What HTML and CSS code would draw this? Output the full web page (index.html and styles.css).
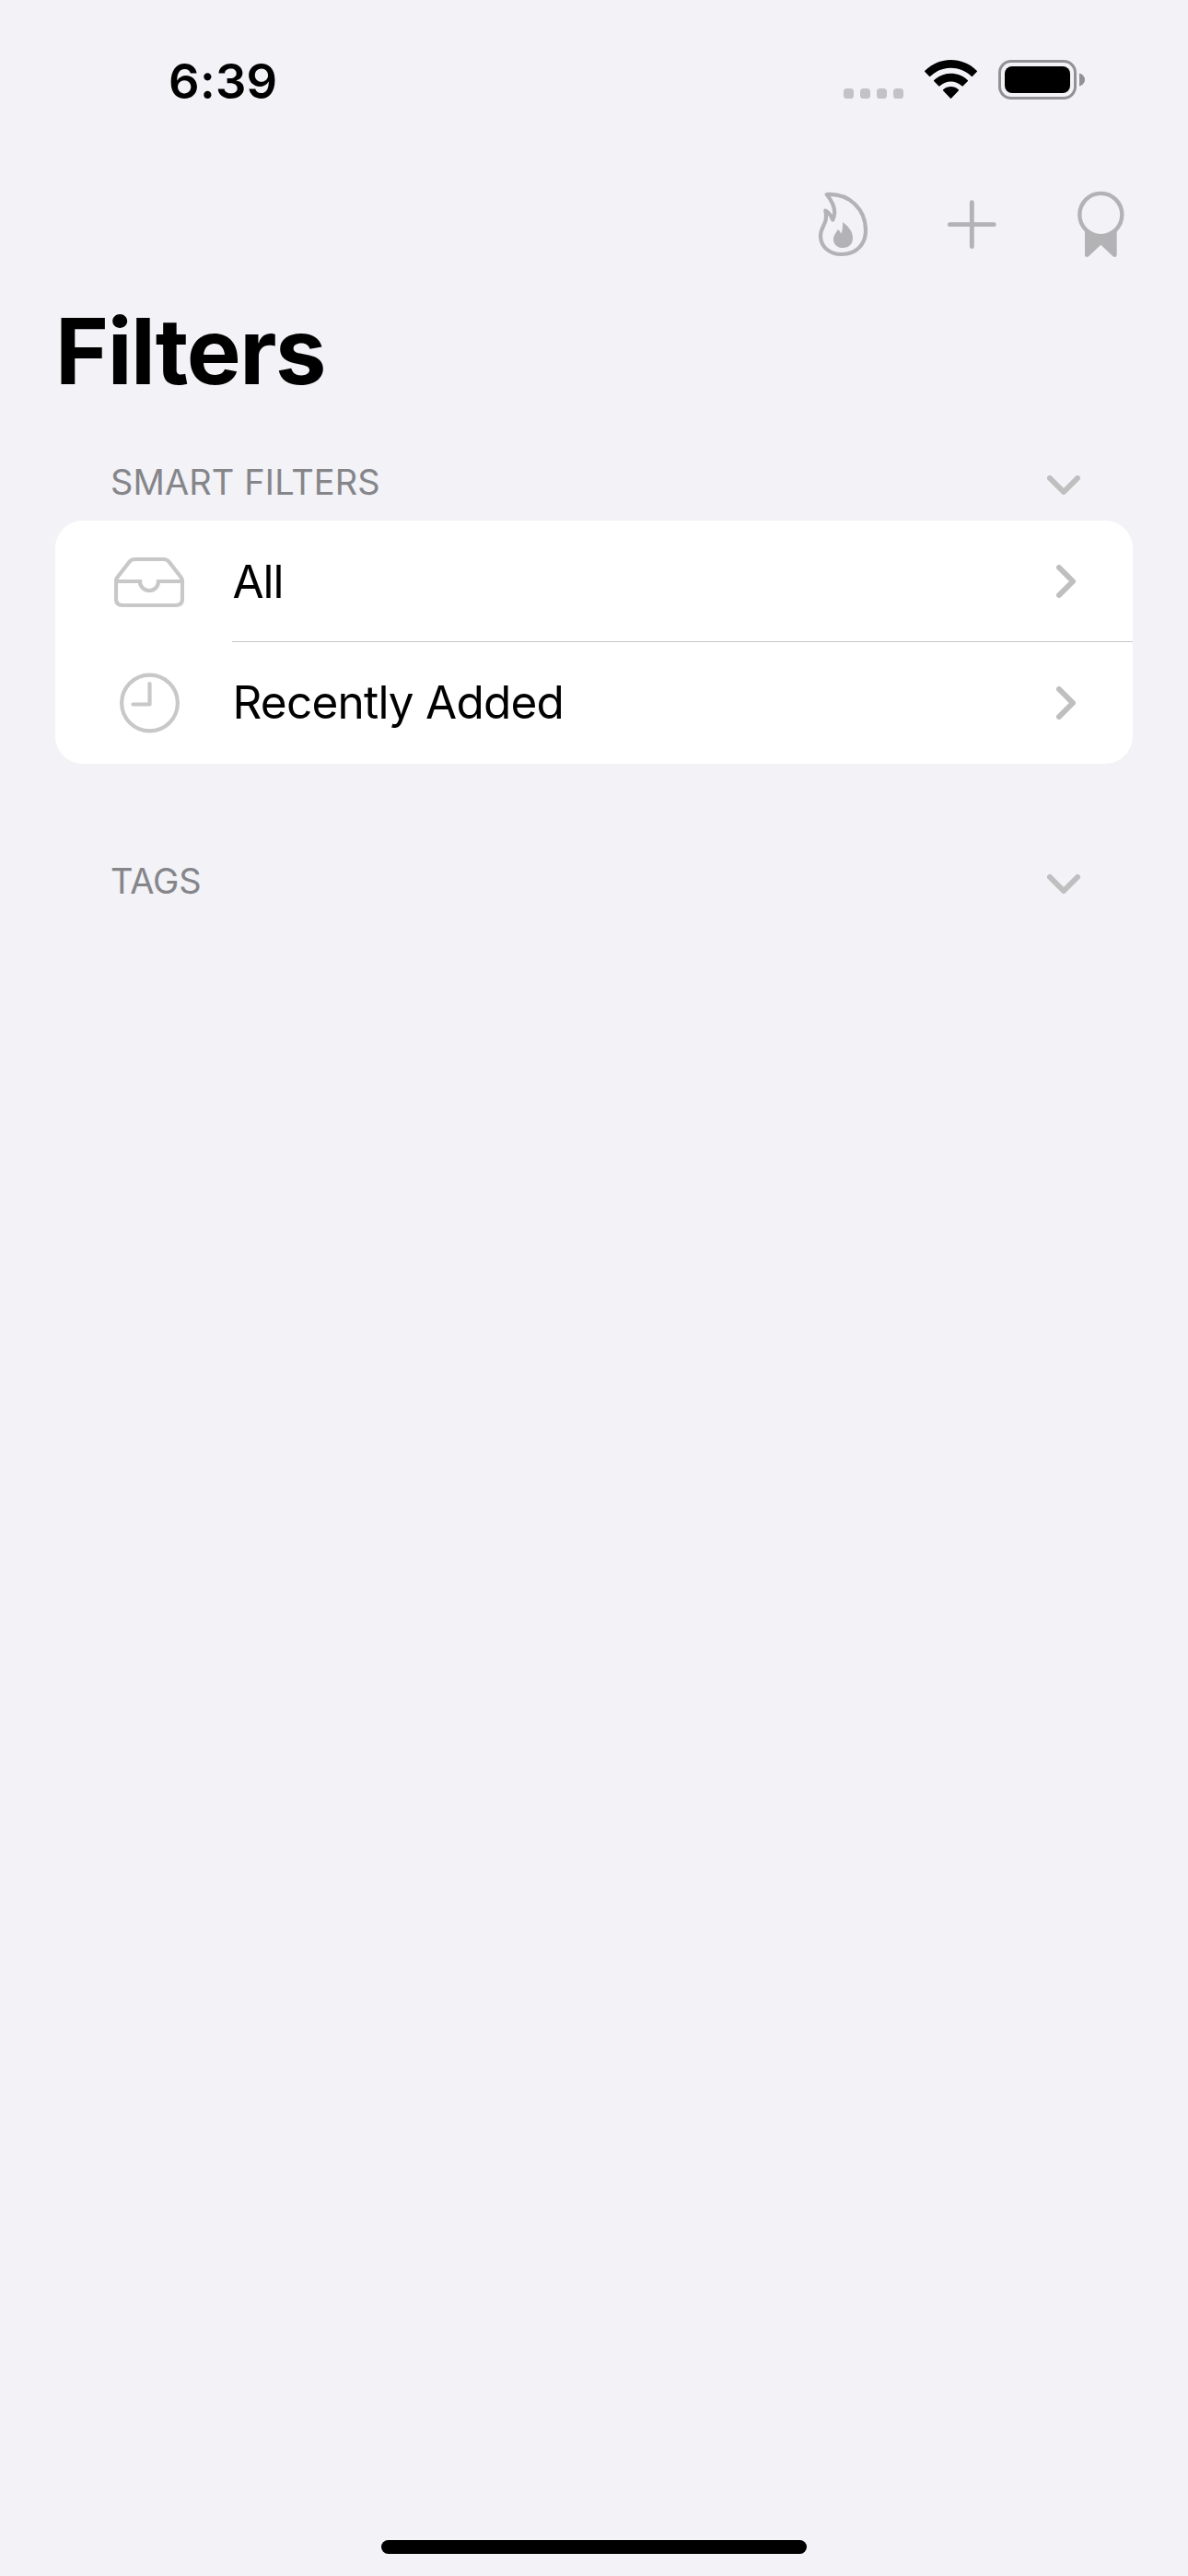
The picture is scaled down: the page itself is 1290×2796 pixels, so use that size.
FILE: index.html
```html
<!DOCTYPE html>
<html lang="en">
<head>
<meta charset="utf-8">
<title>Filters</title>
<link rel="stylesheet" href="styles.css">
</head>
<body>
<div class="screen">
  <header class="status">
    <span class="time">6:39</span>
    <div class="status-icons">
      <svg class="signal" viewBox="0 0 65 46"><g fill="#c3c2c7"><rect y="31" width="11" height="11" rx="3.6"/><rect x="18" y="31" width="11" height="11" rx="3.6"/><rect x="36" y="31" width="11" height="11" rx="3.6"/><rect x="54" y="31" width="11" height="11" rx="3.6"/></g></svg>
      <svg class="wifi" viewBox="312 45 172 138"><path d="M313 80C360 33 436 33 483 80Q485 82 483 84L469 98Q467 100 465 98C427 62 369 62 331 98Q329 100 327 98L313 84Q311 82 313 80ZM343 111C373 82 423 82 453 111Q455 113 453 115L438 130Q436 132 434 130C413 111 383 111 362 130Q360 132 358 130L343 115Q341 113 343 111ZM373 142C387 129 409 129 423 142Q425 144 423 146L400 170Q398 172 396 170L373 146Q371 144 373 142Z"/></svg>
      <svg class="battery" viewBox="0 0 94 46"><rect x="1.5" y="1.5" width="82" height="40" rx="12.5" fill="none" stroke="#929195" stroke-width="3"/><rect x="7" y="7" width="71" height="29" rx="8"/><path d="M88 14.5C91.700 15.500 94 18.300 94 21.500S91.700 27.500 88 28.500Z" fill="#929195"/></svg>
    </div>
  </header>

  <nav class="toolbar">
    <svg class="tool" width="53" height="90" viewBox="57 24 159 270"><path d="M83 63C158 59 210 112 210 180C210 225 180 258 132 258C90 258 63 232 63 198C63 164 88 162 79 116C91 122 98 134 103 146C114 123 108 94 83 63Z" fill="none" stroke="#b3b3b5" stroke-width="12.500" stroke-linejoin="round"/><path d="M135 153C154 168 168 183 168 205C168 225 156 237 136 237C117 237 105 225 105 209C105 195 114 190 119 177C125 181 128 186 130 191C134 183 136 168 135 153Z" fill="#b3b3b5"/></svg>
    <svg class="tool" width="53" height="90" viewBox="57 24 159 270"><path d="M64 161H208M136 89V233" stroke="#b3b3b5" stroke-width="14.500" stroke-linecap="round"/></svg>
    <svg class="tool" width="52" height="90" viewBox="477 24 156 270"><path d="M504 178H608V261Q608 267 601 267Q598 267 595 264L556 227L517 264Q514 267 511 267Q504 267 504 261Z" fill="#b3b3b5"/><ellipse cx="556" cy="129" rx="69" ry="69.500" fill="#f2f2f7" stroke="#b3b3b5" stroke-width="13"/></svg>
  </nav>

  <h1 class="title">Filters</h1>

  <section class="section">
    <div class="section-head">
      <h2 class="label">SMART FILTERS</h2>
      <svg class="down" viewBox="0 0 36 21"><path d="M3 3L18 18L33 3"/></svg>
    </div>
    <ul class="card">
      <li class="row">
        <svg class="icon" viewBox="0 -7 76 66"><g fill="none" stroke="#c8c8c8" stroke-width="4.200"><path d="M2 25.500Q2 23.500 3.500 21.500L16.500 4.800Q18.700 2 22 2H54Q57.300 2 59.500 4.800L72.500 21.500Q74 23.500 74 25.500V45Q74 52 67 52H9Q2 52 2 45Z"/><path d="M2 26H28C28 32 32.500 36 38 36S48 32 48 26H74"/></g></svg>
        <span class="name name-short">All</span>
        <svg class="next" viewBox="0 0 21 36"><path d="M3 3L18 18L3 33"/></svg>
      </li>
      <li class="row">
        <svg class="icon" viewBox="0 0 76 66"><g fill="none" stroke="#c8c8c8" stroke-width="4.200"><circle cx="38.500" cy="33" r="30.400"/><path d="M38.500 12V34.500H20.500" stroke-linecap="round" stroke-linejoin="round"/></g></svg>
        <span class="name">Recently Added</span>
        <svg class="next" viewBox="0 0 21 36"><path d="M3 3L18 18L3 33"/></svg>
      </li>
    </ul>
  </section>

  <section class="section section-tags">
    <div class="section-head">
      <h2 class="label label-tags">TAGS</h2>
      <svg class="down" viewBox="0 0 36 21"><path d="M3 3L18 18L33 3"/></svg>
    </div>
  </section>

  <div class="home-bar"></div>
</div>
</body>
</html>
```
FILE: styles.css
```css
* { box-sizing: border-box; margin: 0; padding: 0; }
body { background: #f2f2f7; font-family: Inter, "Liberation Sans", sans-serif; color: #000; }
svg { display: block; flex: none; }

.screen { display: flex; flex-direction: column; width: 1290px; height: 2796px; }

.status { display: flex; align-items: center; justify-content: space-between; height: 176px; padding: 0 112px 0 183px; }
.time { font-size: 52.5px; font-weight: 600; letter-spacing: .3px; line-height: 88px; }
.status-icons { display: flex; align-items: center; }
.signal { width: 65px; height: 46px; margin-right: 23px; }
.wifi { width: 57px; height: 46px; margin-right: 23px; }
.battery { width: 94px; height: 46px; }

.toolbar { display: flex; align-items: center; justify-content: flex-end; gap: 87px; height: 134px; padding-right: 69px; }

.title { padding-left: 60px; font-size: 99px; font-weight: 700; line-height: 142px; letter-spacing: -1.45px; }

.section { margin: 29px 60px 0; }
.section-tags { margin-top: 85px; }
.section-head { display: flex; align-items: center; justify-content: space-between; height: 84px; padding: 0 57px 0 60px; }
.label { font-size: 38px; font-weight: 400; line-height: 84px; letter-spacing: .12px; color: #85858a; }
.label-tags { letter-spacing: -.1px; }
.down { width: 36px; height: 21px; margin-top: 7px; }
.down path, .next path { fill: none; stroke: #bfbfc0; stroke-width: 6; stroke-linecap: round; stroke-linejoin: round; }

.card { list-style: none; background: #fff; border-radius: 30px; overflow: hidden; }
.row { display: flex; align-items: center; height: 132px; padding: 0 62px 0 64px; }
.row:not(:last-child) { background: linear-gradient(#c6c6c8, #c6c6c8) 192px 100% / 978px 1px no-repeat; }
.row:last-child { padding-bottom: 1px; }
.icon { width: 76px; height: 66px; }
.name { flex: 1; padding-left: 52.5px; font-size: 49.5px; line-height: 131px; letter-spacing: -.78px; }
.name-short { letter-spacing: -1.1px; }
.next { width: 21px; height: 36px; }

.home-bar { width: 462px; height: 15px; margin: auto auto 24px; border-radius: 8px; background: #000; }
```
